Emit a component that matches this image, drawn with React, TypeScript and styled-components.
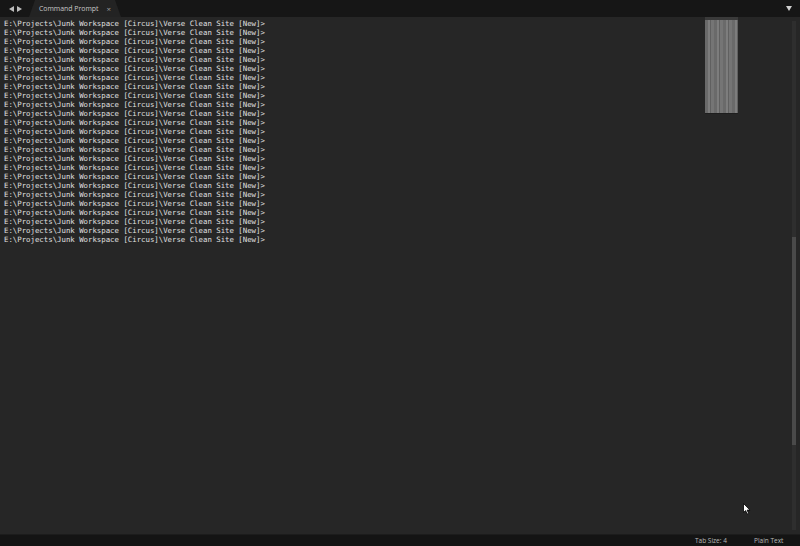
import React from "react";
import styled, { createGlobalStyle } from "styled-components";

const Global = createGlobalStyle`
  html, body { margin: 0; padding: 0; background: #262626; }
  #root { width: 800px; height: 546px; }
`;

const Window = styled.div`
  width: 800px;
  height: 546px;
  display: flex;
  flex-direction: column;
  background: #262626;
  overflow: hidden;
  position: relative;
`;

const TabBar = styled.div`
  height: 17px;
  flex: 0 0 17px;
  background: #161616;
  display: flex;
  align-items: stretch;
  position: relative;
`;

const NavArrows = styled.div`
  width: 28px;
  display: flex;
  align-items: center;
  justify-content: center;
  gap: 3px;
  padding-left: 1px;
`;

const Tab = styled.div`
  width: 92px;
  background: #232323;
  clip-path: polygon(6px 0, calc(100% - 6px) 0, 100% 100%, 0 100%);
  display: flex;
  align-items: center;
  padding: 0 10px 0 10px;
  box-sizing: border-box;
  justify-content: space-between;
  font-family: "Open Sans", "Liberation Sans", sans-serif;
  font-size: 6.9px;
  color: #c8c8c8;
`;

const Close = styled.span`
  color: #9a9a9a;
  font-size: 8px;
  line-height: 1;
`;

const Spacer = styled.div`
  flex: 1;
`;

const DropDown = styled.div`
  width: 22px;
  display: flex;
  align-items: center;
  justify-content: center;
`;

const Body = styled.div`
  flex: 1;
  display: flex;
  position: relative;
  background: #262626;
`;

const Editor = styled.div`
  flex: 1;
  padding: 2px 0 0 4px;
  font-family: "DejaVu Sans Mono", monospace;
  font-size: 7.35px;
  line-height: 9px;
  color: #e0e0e0;
  white-space: pre;
`;

const Minimap = styled.div`
  position: absolute;
  left: 705px;
  top: 0;
  width: 33px;
  height: 96px;
  background: repeating-linear-gradient(
      90deg,
      #6a6a6a 0px,
      #6a6a6a 3px,
      #7d7d7d 3px,
      #7d7d7d 5px,
      #606060 5px,
      #606060 6px,
      #757575 6px,
      #757575 9px
    );
  box-shadow: inset 0 3px 0 #3a3a3a, 0 1px 0 #1e1e1e;
`;

const ScrollTrack = styled.div`
  width: 4px;
  margin: 4px 4px 4px 0;
  background: #2e2e2e;
  display: flex;
  flex-direction: column;
`;

const ScrollThumb = styled.div`
  margin-top: 216px;
  height: 208px;
  background: #4a4a4a;
`;

const StatusBar = styled.div`
  height: 11px;
  flex: 0 0 11px;
  background: #141414;
  display: flex;
  align-items: center;
  justify-content: flex-end;
  font-family: "Open Sans", "Liberation Sans", sans-serif;
  font-size: 6.5px;
  color: #b8b8b8;
  border-top: 1px solid #1c1c1c;
`;

const StatusItem = styled.span<{ $w: number }>`
  width: ${(p) => p.$w}px;
`;

const Pointer = styled.svg`
  position: absolute;
  left: 743px;
  top: 503px;
`;

const line = "E:\\Projects\\Junk Workspace [Circus]\\Verse Clean Site [New]>";
const lines = Array.from({ length: 25 }, () => line);

export default function App() {
  return (
    <>
      <Global />
      <Window>
        <TabBar>
          <NavArrows>
            <svg width="5" height="6" viewBox="0 0 5 6">
              <path d="M5 0 L0 3 L5 6 Z" fill="#bdbdbd" />
            </svg>
            <svg width="5" height="6" viewBox="0 0 5 6">
              <path d="M0 0 L5 3 L0 6 Z" fill="#bdbdbd" />
            </svg>
          </NavArrows>
          <Tab>
            <span>Command Prompt</span>
            <Close>×</Close>
          </Tab>
          <Spacer />
          <DropDown>
            <svg width="6" height="5" viewBox="0 0 6 5">
              <path d="M0 0 L6 0 L3 5 Z" fill="#d0d0d0" />
            </svg>
          </DropDown>
        </TabBar>
        <Body>
          <Editor>{lines.join("\n")}</Editor>
          <Minimap />
          <ScrollTrack>
            <ScrollThumb />
          </ScrollTrack>
        </Body>
        <StatusBar>
          <StatusItem $w={59}>Tab Size: 4</StatusItem>
          <StatusItem $w={46}>Plain Text</StatusItem>
        </StatusBar>
        <Pointer width="8" height="12" viewBox="0 0 8 12">
          <path d="M0.5 0.5 L0.5 9.5 L2.6 7.6 L4.2 11 L5.6 10.4 L4.1 7.1 L7 7.1 Z" fill="#ffffff" stroke="#000" strokeWidth="0.8" />
        </Pointer>
      </Window>
    </>
  );
}
